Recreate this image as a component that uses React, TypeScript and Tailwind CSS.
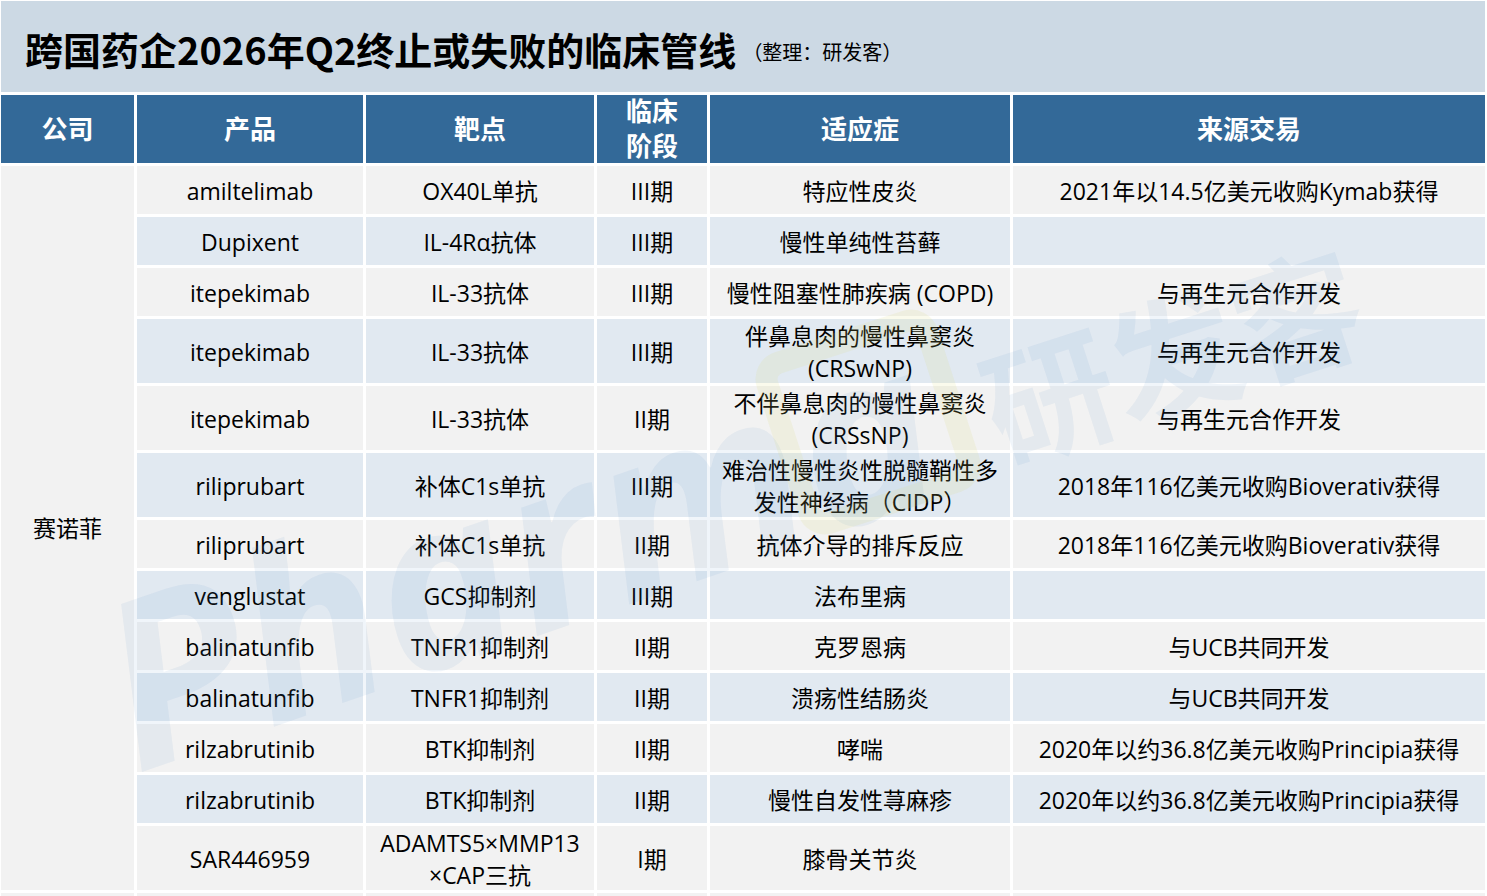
import React from 'react'

type Row = {
  product: string
  target: string[]
  phase: string
  indication: string[]
  source: string
}

// 赛诺菲 pipeline rows, top to bottom; two-line cells sit in the taller rows
const rows: Row[] = [
  { product: 'amiltelimab', target: ['OX40L单抗'], phase: 'III期', indication: ['特应性皮炎'], source: '2021年以14.5亿美元收购Kymab获得' },
  { product: 'Dupixent', target: ['IL-4Rα抗体'], phase: 'III期', indication: ['慢性单纯性苔藓'], source: '' },
  { product: 'itepekimab', target: ['IL-33抗体'], phase: 'III期', indication: ['慢性阻塞性肺疾病 (COPD)'], source: '与再生元合作开发' },
  { product: 'itepekimab', target: ['IL-33抗体'], phase: 'III期', indication: ['伴鼻息肉的慢性鼻窦炎', '(CRSwNP)'], source: '与再生元合作开发' },
  { product: 'itepekimab', target: ['IL-33抗体'], phase: 'II期', indication: ['不伴鼻息肉的慢性鼻窦炎', '(CRSsNP)'], source: '与再生元合作开发' },
  { product: 'riliprubart', target: ['补体C1s单抗'], phase: 'III期', indication: ['难治性慢性炎性脱髓鞘性多', '发性神经病（CIDP）'], source: '2018年116亿美元收购Bioverativ获得' },
  { product: 'riliprubart', target: ['补体C1s单抗'], phase: 'II期', indication: ['抗体介导的排斥反应'], source: '2018年116亿美元收购Bioverativ获得' },
  { product: 'venglustat', target: ['GCS抑制剂'], phase: 'III期', indication: ['法布里病'], source: '' },
  { product: 'balinatunfib', target: ['TNFR1抑制剂'], phase: 'II期', indication: ['克罗恩病'], source: '与UCB共同开发' },
  { product: 'balinatunfib', target: ['TNFR1抑制剂'], phase: 'II期', indication: ['溃疡性结肠炎'], source: '与UCB共同开发' },
  { product: 'rilzabrutinib', target: ['BTK抑制剂'], phase: 'II期', indication: ['哮喘'], source: '2020年以约36.8亿美元收购Principia获得' },
  { product: 'rilzabrutinib', target: ['BTK抑制剂'], phase: 'II期', indication: ['慢性自发性荨麻疹'], source: '2020年以约36.8亿美元收购Principia获得' },
  { product: 'SAR446959', target: ['ADAMTS5×MMP13', '×CAP三抗'], phase: 'I期', indication: ['膝骨关节炎'], source: '' },
]

function Cell({ lines, tone }: { lines: string[]; tone: string }) {
  return (
    <div className={`${tone} flex flex-col items-center justify-center pt-[2px] text-center leading-[32px] text-[23px] text-black whitespace-nowrap`}>
      {lines.map((l, i) => (
        <span key={i}>{l}</span>
      ))}
    </div>
  )
}

function HeadCell({ children }: { children: React.ReactNode }) {
  return (
    <div className="bg-[#336998] flex flex-col items-center justify-center text-white font-bold text-[26px] leading-[35px]">
      {children}
    </div>
  )
}

function Watermark() {
  return (
    <div className="pointer-events-none absolute inset-0 overflow-hidden">
      <div className="absolute left-[106px] top-[478px] -rotate-[19deg] origin-left text-[232px] font-bold italic leading-none text-[#5a8fc4]/[0.09] font-['Open_Sans',sans-serif]">
        Pharma
      </div>
      <div className="absolute left-[772px] top-[232px] w-[190px] h-[190px] -rotate-[18deg] rounded-[28px] border-[22px] border-[#d9dc7a]/[0.14]" />
      <div className="absolute left-[975px] top-[190px] -rotate-[18deg] text-[130px] font-bold leading-none text-[#5a8fc4]/[0.09] font-['Noto_Sans_CJK_SC',sans-serif]">
        研发客
      </div>
    </div>
  )
}

export default function App() {
  return (
    <div className="w-[1487px] h-[896px] overflow-hidden bg-white pl-px pt-px font-['Open_Sans','Noto_Sans_CJK_SC',sans-serif]">
      <div className="w-[1484px] h-[91px] bg-[#ccd9e4] flex items-center pl-[24px] pt-[4px]">
        <span className="text-[38px] font-bold text-black font-['Noto_Sans_CJK_SC',sans-serif]">
          跨国药企2026年Q2终止或失败的临床管线
        </span>
        <span className="ml-[6px] mt-[6px] text-[20px] text-black font-['Noto_Sans_CJK_SC',sans-serif]">（整理：研发客）</span>
      </div>

      <div className="relative mt-[3px] w-[1484px]">
        <div className="grid grid-cols-[133px_226px_228px_110px_300px_472px] grid-rows-[68px_48px_48px_48px_64px_64px_64px_48px_48px_48px_48px_48px_48px_64px_48px] gap-[3px]">
          <HeadCell>公司</HeadCell>
          <HeadCell>产品</HeadCell>
          <HeadCell>靶点</HeadCell>
          <HeadCell>
            <span>临床</span>
            <span>阶段</span>
          </HeadCell>
          <HeadCell>适应症</HeadCell>
          <HeadCell>来源交易</HeadCell>

          <div className="bg-[#f2f2f2] row-span-[13] flex items-center justify-center text-[23px] text-black">
            赛诺菲
          </div>

          {rows.map((r, i) => {
            const tone = i % 2 === 0 ? 'bg-[#f2f2f2]' : 'bg-[#e1e9f1]'
            return (
              <React.Fragment key={i}>
                <Cell lines={[r.product]} tone={tone} />
                <Cell lines={r.target} tone={tone} />
                <Cell lines={[r.phase]} tone={tone} />
                <Cell lines={r.indication} tone={tone} />
                <Cell lines={r.source ? [r.source] : []} tone={tone} />
              </React.Fragment>
            )
          })}

          {/* next company block starts just below the fold */}
          <div className="bg-[#f2f2f2]" />
          <div className="bg-[#f2f2f2]" />
          <div className="bg-[#f2f2f2]" />
          <div className="bg-[#f2f2f2]" />
          <div className="bg-[#f2f2f2]" />
          <div className="bg-[#f2f2f2]" />
        </div>
        <Watermark />
      </div>
    </div>
  )
}
